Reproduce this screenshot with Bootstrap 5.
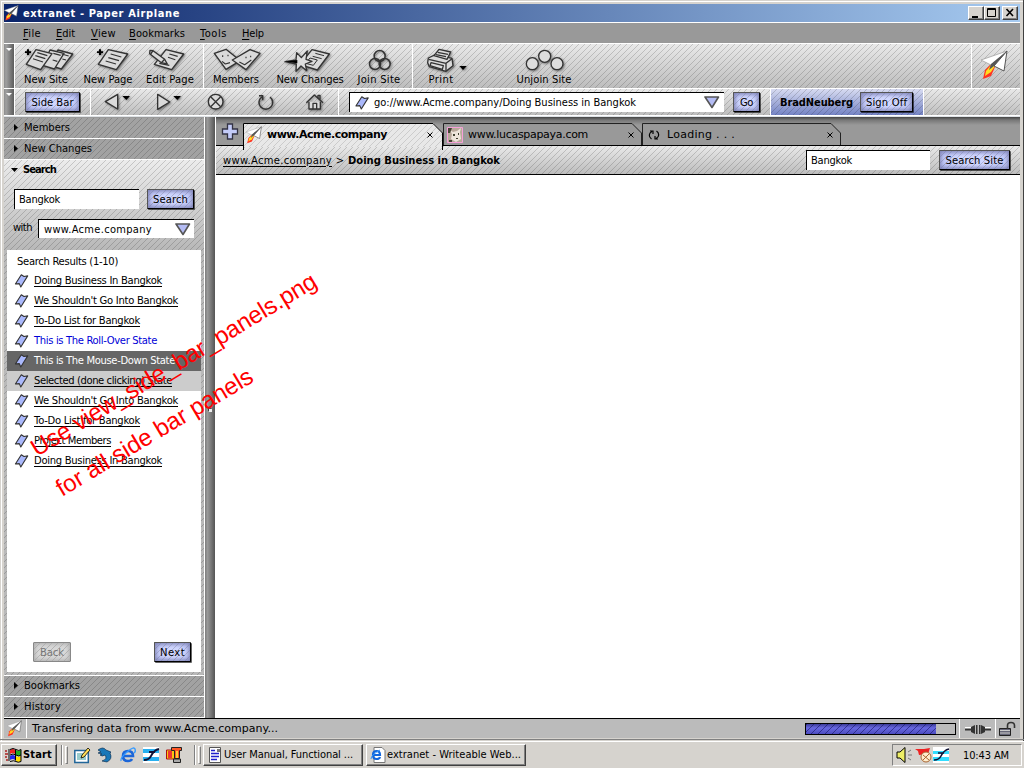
<!DOCTYPE html>
<html lang="en">
<head>
<meta charset="utf-8">
<meta name="viewport" content="width=device-width, initial-scale=1">
<title>extranet - Paper Airplane</title>
<link rel="stylesheet" href="https://cdn.jsdelivr.net/npm/bootstrap@5.3.0/dist/css/bootstrap.min.css">
<style>
:root{--lines:url("data:image/svg+xml,%3Csvg xmlns='http://www.w3.org/2000/svg' width='6' height='6' fill-opacity='.16' shape-rendering='crispEdges'%3E%3Cpath d='M5 0h1v1H5zM4 1h1v1H4zM3 2h1v1H3zM2 3h1v1H2zM1 4h1v1H1zM0 5h1v1H0z'/%3E%3C/svg%3E")}
*{box-sizing:border-box}
html,body{width:1024px;height:768px;overflow:hidden}
body{background:#d6d3ce;color:#000;font:10px/12px "DejaVu Sans",sans-serif}
svg{display:block;flex:none;overflow:visible}
[data-w]{display:inline-block;white-space:nowrap}
.tah{font-family:"DejaVu Sans Condensed","DejaVu Sans",sans-serif;font-size:11px}
.app{height:741px;padding:4px 3px 0 4px;border-right:1px solid #404040;background:#d6d3ce;box-shadow:inset 1px 1px #d6d3ce,inset 2px 2px #fff}
.inner{width:1016px}
.titlebar{height:19px;background:linear-gradient(90deg,#0a246a,#a6caf0);border-bottom:1px solid #fff;color:#fff;font-weight:bold}
.wbtn{width:16px;height:14px;background:#d6d3ce;border:1px solid;border-color:#fff #404040 #404040 #fff;box-shadow:inset -1px -1px #808080}
.menus{height:21px;background:#999;border-bottom:1px solid #fff;padding-left:19px}
.menus span{line-height:21px}
.menus u,.ul{text-underline-offset:2px;text-decoration-thickness:1px}
.hatch{background:var(--lines),linear-gradient(#e9e9e9,#bdbdbd)}
.gut{width:11px;border-right:1px solid #fff;background:linear-gradient(90deg,#8a8a8a,#a0a0a0 20%,#5c5c5c);flex:none}
.bar1{height:45px;border-bottom:1px solid #fff}
.bar2{height:27px;border-bottom:1px solid #fff}
.sep{border-right:1px solid #fff}
.tool{flex:none;text-align:center}
.tool svg,.nav2 svg{fill:none;stroke:#333;stroke-width:4;stroke-linejoin:round;filter:drop-shadow(1px 1px 1px rgba(0,0,0,.45))}
.tool .lbl{margin-top:1px;display:block}
.pg{fill:#dadada}
.k{fill:#000;stroke:none}
.pbtn{height:20px;flex:none;border:1px solid;border-color:#555 #000 #000 #555;border-radius:1px;padding:0;color:#000;text-align:center;font:10px/17px "DejaVu Sans",sans-serif;background:var(--lines),radial-gradient(#d0d6ff 40%,#aab2ea);box-shadow:inset 0 0 4px 1px #7d80b0,1px 1px 0 rgba(0,0,0,.6)}
.pbtn.off{color:#777;border-color:#888;background:var(--lines),#d8d8d8;box-shadow:inset 0 0 4px 1px #aaa}
.inp{background:#fff;height:20px;border:0 solid #000;border-width:1px 0 0 1px;flex:none;line-height:19px}
.user{background:var(--lines),linear-gradient(#d8dcf2,#7483c4);border:solid #fff;border-width:0 1px;padding:3px 0 0 9px;width:154px;margin-left:-1px}
.side{width:201px;border-right:1px solid #fff;padding-top:1px;background:#999}
.acc{height:21px;border-bottom:1px solid #fff;background:var(--lines),#a2a2a2}
.search{height:516px;border-bottom:1px solid #fff;background:var(--lines) 0 0/6px 6px,linear-gradient(#ececec,#b9b9b9 88px);position:relative}
.list{width:194px;height:422px;background:#fff;margin:12px 0 0 3px}
.hit{height:20px;padding-left:7px;gap:5px}
.split{width:11px;background:linear-gradient(90deg,#7c7c7c,#999 25%,#555);border-right:1px solid #fff;position:relative}
.grip{position:absolute;left:4px;top:292px;width:3px;height:3px;background:#eee;box-shadow:-1px -1px #444}
.tabs{height:29px;background:linear-gradient(#444,#777 3px,#999 8px);border-bottom:1px solid #000}
.tab{width:199px;height:23px;position:relative;margin-bottom:-1px}
.tab>svg.shape{position:absolute;left:0;top:0}
.tab>*:not(.shape){position:relative}
.crumb{height:29px;border-bottom:1px solid #000;padding-left:7px}
.crumb>u,.crumb>span,.crumb>b{padding-top:1px}
.stat{border-top:1px solid #000;height:20px;background:#bbb;font-size:11px}
.prog{width:151px;height:12px;border:1px solid #000;background:#bbb}
.fillb{height:10px;background:repeating-linear-gradient(135deg,rgba(0,0,70,.45) 0 1px,transparent 1px 4.95px),linear-gradient(#3c3c98,#6868e0 40%,#4c4cc0)}
.edge{height:2px;margin:1px -4px 0;border-top:1px solid #808080}
.task{height:27px;border-top:1px solid #fff;background:#d6d3ce;font-size:11px}
.tb{height:22px;border:1px solid;border-color:#fff #404040 #404040 #fff;box-shadow:inset -1px -1px #808080}
.tray{width:130px;height:22px;border:1px solid;border-color:#808080 #fff #fff #808080}
.vsep{width:1px;height:20px;background:#808080;box-shadow:1px 0 #fff}
.vgrip{width:3px;height:18px;border:1px solid;border-color:#fff #808080 #808080 #fff}
.note{position:absolute;color:#f00;font:24px/28px "Liberation Sans",sans-serif;transform-origin:0 22px;white-space:nowrap}
</style>
</head>
<body>
<svg width="0" height="0" style="position:absolute">
 <defs>
  <symbol id="plane" viewBox="0 0 27 30">
   <path d="M9 15 4 20 2 29 10 26 14 17z" fill="#f32"/><path d="M10 15 5 21 4 26 10 22 14 16z" fill="#fd2"/>
   <path d="M0 10 26 1 10 15z" fill="#fff" stroke="#999" stroke-width=".7"/><path d="M26 1 23 21 13 16z" fill="#fff" stroke="#555" stroke-width="1"/><path d="M26 1 10 14 8 20 13 16z" fill="#555"/>
  </symbol>
  <symbol id="mark" viewBox="0 0 14 14"><path d="M6.800.8 9.500 2.500 13.200 1.900 6.300 13 4.800 9.600.9 10z" fill="#aab8fb" stroke="#333" stroke-width="1.100" stroke-linejoin="round"/></symbol>
  <symbol id="down" viewBox="0 0 16 13"><path d="M1 1H14.5L8 11.500z" fill="#b4bcf4" stroke="#555" stroke-width="1.600" stroke-linejoin="round"/></symbol>
 </defs>
</svg>
<div class="app"><div class="inner">
 <header class="titlebar d-flex align-items-center tah">
  <svg width="15" height="16" class="me-1"><use href="#plane"/></svg><span data-w="157" style="padding-top:1px">extranet - Paper Airplane</span>
  <div class="d-flex ms-auto" style="padding-right:2px">
   <div class="wbtn"><svg width="14" height="12"><path d="M3 9h6v2H3z"/></svg></div>
   <div class="wbtn"><svg width="14" height="12"><path d="M2.500 1.500h8v8h-8zM2 2.500h9" fill="none" stroke="#000"/></svg></div>
   <div class="wbtn" style="margin-left:2px"><svg width="14" height="12"><path d="M3.500 2 10 9M10 2 3.500 9" stroke="#000" stroke-width="1.600"/></svg></div>
  </div>
 </header>
 <nav class="menus d-flex tah">
  <span style="width:33px"><span data-w="18"><u>F</u>ile</span></span><span style="width:35px"><span data-w="19"><u>E</u>dit</span></span><span style="width:38px"><span data-w="25"><u>V</u>iew</span></span><span style="width:71px"><span data-w="56"><u>B</u>ookmarks</span></span><span style="width:42px"><span data-w="27"><u>T</u>ools</span></span><span data-w="22"><u>H</u>elp</span>
 </nav>
 <div class="bar1 d-flex">
  <div class="gut"><svg width="10" height="10"><path d="M2 4h6L5 7z" fill="#fff"/></svg></div>
  <div class="hatch d-flex flex-grow-1">
   <div class="d-flex sep" style="width:189px">
    <div class="tool"><svg width="62" height="29" viewBox="45 132 186 87"><path class="pg" d="M174 150 218 162 184 207 150 196z"/><path class="pg" d="M150 150 192 160 163 207 128 196z"/><path class="pg" d="M108 149 156 161 122 209 79 193z"/><path d="M112 158 142 167M106 167 136 176M99 176 129 186M160 160 182 166M158 180 172 184M185 162 206 168M187 177 198 180" stroke-width="3.400"/><path class="k" d="M75 154h6v-6h6v6h6v5h-6v6h-6v-6h-6z"/></svg><span class="lbl"><span data-w="44">New Site</span></span></div>
    <div class="tool"><svg width="62" height="29" viewBox="231 132 186 87"><path class="pg" d="M325 149 383 162 349 209 295 193z"/><path d="M332 162 364 171M325 173 357 182M317 183 348 192" stroke-width="3.400"/><path class="k" d="M291 154h6v-6h6v6h6v5h-6v6h-6v-6h-6z"/></svg><span class="lbl"><span data-w="49">New Page</span></span></div>
    <div class="tool"><svg width="62" height="29" viewBox="417 132 186 87"><path class="pg" d="M498 149 551 162 515 209 463 193z"/><path d="M508 162 533 169M504 172 526 179M478 190 508 196" stroke-width="3.400"/><path class="pg" d="M450 151 459 152 494 178 502 192 484 188 449 161z"/><path d="M459 152 452 162M494 178 484 188"/></svg><span class="lbl"><span data-w="48">Edit Page</span></span></div>
   </div>
   <div class="d-flex sep" style="width:209px">
    <div class="tool"><svg width="64" height="29" viewBox="612 132 192 87"><g transform="translate(600 120)"><path class="pg" d="M43 40 78 28 121 62 78 88z"/><path class="pg" d="M97 60 150 29 180 40 138 89z"/><path d="M68 46v5M84 44v5M66 64 76 72 90 68M138 50v5M152 47v5M118 66 134 74 154 60" stroke-width="3.400"/></g></svg><span class="lbl"><span data-w="46">Members</span></span></div>
    <div class="tool"><svg width="84" height="29" viewBox="804 132 252 87"><g transform="translate(600 120)"><path class="pg" d="M336 29 388 42 352 90 300 74z"/><path d="M346 40 372 47M338 49 365 56M330 54 352 60 340 76 317 70z" stroke-width="3"/><path fill="#ddd" d="M255 65 288 60 290 38 304 53 322 33 318 58 336 64 316 72 320 92 303 78 288 94 289 72z"/><path class="k" d="M255 65 292 60 292 70z"/></g></svg><span class="lbl"><span data-w="67">New Changes</span></span></div>
    <div class="tool"><svg width="54" height="29" viewBox="1056 132 162 87"><g transform="translate(600 120)" stroke-width="4.500"><circle cx="539" cy="48" r="16.500"/><circle cx="525" cy="72" r="16.500"/><circle cx="554" cy="72" r="16.500"/></g></svg><span class="lbl"><span data-w="43">Join Site</span></span></div>
   </div>
   <div class="tool"><svg width="56" height="29" viewBox="1239 132 168 87"><g transform="translate(600 120)"><path class="pg" d="M685 54 706 44 756 55 759 77 738 94 688 80 683 68z"/><path class="pg" d="M702 47 717 28 752 36 741 58z"/><path d="M713 37 744 43M708 44 738 50M686 58 738 70 756 56M738 70V93M693 68 730 77 727 88 690 77z"/><path class="k" d="M778 78h22l-11 12z"/></g></svg><span class="lbl"><span data-w="25">Print</span></span></div>
   <div class="tool" style="margin-left:41px"><svg width="68" height="29" viewBox="1530 132 204 87"><g transform="translate(1200 120)" fill="#ddd"><circle cx="397" cy="71" r="18"/><circle cx="471" cy="71" r="18"/><circle cx="434" cy="49" r="18"/></g></svg><span class="lbl"><span data-w="55">Unjoin Site</span></span></div>
   <div class="ms-auto" style="width:49px;border-left:1px solid #fff;padding:6px 0 0 9px"><svg width="27" height="30"><use href="#plane"/></svg></div>
  </div>
 </div>
 <div class="bar2 d-flex">
  <div class="gut"><svg width="10" height="10"><path d="M2 4h6L5 7z" fill="#fff"/></svg></div>
  <div class="hatch d-flex flex-grow-1">
   <div class="sep d-flex" style="width:76px;padding:3px 0 0 10px"><button class="pbtn" style="width:55px"><span data-w="42">Side Bar</span></button></div>
   <div class="sep d-flex nav2" style="width:248px">
    <svg width="45" height="26" viewBox="273 267 135 78"><path class="pg" d="M353 283V327L316 305z"/><path class="k" d="M367 288h23l-11 12z"/></svg>
    <svg width="54" height="26" viewBox="408 267 162 78"><path class="pg" d="M473 283V328L509 306z"/><path class="k" d="M520 288h23l-11 12z"/></svg>
    <svg width="50" height="26" viewBox="570 267 150 78"><circle class="pg" cx="647" cy="305" r="22"/><path d="M632 290 662 320M662 290 632 320"/></svg>
    <svg width="50" height="26" viewBox="720 267 150 78"><path d="M777 287H788V301M785 291A20.500 20.500 0 1 0 810 291" stroke-width="4.500"/></svg>
    <svg width="48" height="26" viewBox="870 267 144 78"><path class="pg" d="M927 305V327H961V305"/><path d="M919 308 943 285 969 308M954 296V286H960V300M939 327V310H950V327"/></svg>
   </div>
   <div class="d-flex" style="width:432px;padding:3px 0 0 10px">
    <div class="inp d-flex align-items-center" style="width:375px"><svg width="14" height="14" style="margin:0 5px 0 5px"><use href="#mark"/></svg><span class="tah" data-w="262">go://www.Acme.company/Doing Business in Bangkok</span><svg width="16" height="13" class="ms-auto" style="margin-right:4px"><use href="#down"/></svg></div>
    <button class="pbtn" style="width:27px;margin-left:9px"><span data-w="13">Go</span></button>
   </div>
   <div class="user d-flex"><b class="tah" style="line-height:21px;width:80px"><span data-w="73">BradNeuberg</span></b><button class="pbtn" style="width:53px"><span data-w="41">Sign Off</span></button></div>
  </div>
 </div>
 <div class="d-flex border-top border-black" style="height:602px">
  <aside class="side flex-shrink-0">
   <div class="acc d-flex align-items-center"><svg width="20" height="8"><path d="M10 0v7l4-3.500z"/></svg><span data-w="46">Members</span></div>
   <div class="acc d-flex align-items-center"><svg width="20" height="8"><path d="M10 0v7l4-3.500z"/></svg><span data-w="68">New Changes</span></div>
   <div class="search">
    <div class="d-flex align-items-center" style="height:20px"><svg width="19" height="8"><path d="M7 2h7L10.500 6z"/></svg><b data-w="33">Search</b></div>
    <div class="d-flex" style="padding:9px 0 0 10px"><div class="inp tah" style="width:125px;padding-left:4px"><span data-w="41">Bangkok</span></div><button class="pbtn" style="width:47px;margin-left:8px"><span data-w="35">Search</span></button></div>
    <div class="d-flex" style="padding:10px 0 0 9px"><span style="width:25px;line-height:18px"><span data-w="19">with</span></span><div class="inp tah d-flex align-items-center" style="width:156px;padding-left:5px;height:19px"><span data-w="108">www.Acme.company</span><svg width="16" height="13" class="ms-auto" style="margin-right:3px"><use href="#down"/></svg></div></div>
    <div class="list d-flex flex-column">
     <div style="height:21px;padding:6px 0 0 10px"><span data-w="101">Search Results (1-10)</span></div>
     <div class="hit d-flex align-items-center"><svg width="15" height="14"><use href="#mark"/></svg><u class="ul" data-w="128">Doing Business In Bangkok</u></div>
     <div class="hit d-flex align-items-center"><svg width="15" height="14"><use href="#mark"/></svg><u class="ul" data-w="144">We Shouldn't Go Into Bangkok</u></div>
     <div class="hit d-flex align-items-center"><svg width="15" height="14"><use href="#mark"/></svg><u class="ul" data-w="106">To-Do List for Bangkok</u></div>
     <div class="hit d-flex align-items-center" style="color:#0000d8"><svg width="15" height="14"><use href="#mark"/></svg><span data-w="123">This is The Roll-Over State</span></div>
     <div class="hit d-flex align-items-center text-white" style="background:#666"><svg width="15" height="14"><use href="#mark"/></svg><span data-w="141">This is The Mouse-Down State</span></div>
     <div class="hit d-flex align-items-center" style="background:#ccc"><svg width="15" height="14"><use href="#mark"/></svg><u class="ul" data-w="138">Selected (done clicking) State</u></div>
     <div class="hit d-flex align-items-center"><svg width="15" height="14"><use href="#mark"/></svg><u class="ul" data-w="144">We Shouldn't Go Into Bangkok</u></div>
     <div class="hit d-flex align-items-center"><svg width="15" height="14"><use href="#mark"/></svg><u class="ul" data-w="106">To-Do List for Bangkok</u></div>
     <div class="hit d-flex align-items-center"><svg width="15" height="14"><use href="#mark"/></svg><u class="ul" data-w="77">Project Members</u></div>
     <div class="hit d-flex align-items-center"><svg width="15" height="14"><use href="#mark"/></svg><u class="ul" data-w="128">Doing Business In Bangkok</u></div>
     <div class="d-flex mt-auto justify-content-between" style="padding:0 10px 10px 26px"><button class="pbtn off" style="width:38px"><span data-w="24">Back</span></button><button class="pbtn" style="width:37px"><span data-w="25">Next</span></button></div>
    </div>
   </div>
   <div class="acc d-flex align-items-center"><svg width="20" height="8"><path d="M10 0v7l4-3.500z"/></svg><span data-w="56">Bookmarks</span></div>
   <div class="acc d-flex align-items-center"><svg width="20" height="8"><path d="M10 0v7l4-3.500z"/></svg><span data-w="37">History</span></div>
  </aside>
  <div class="split flex-shrink-0"><div class="grip"></div></div>
  <main class="flex-grow-1 bg-white">
   <div class="tabs d-flex align-items-end">
    <svg width="27" height="23"><path d="M11 2.500h5v5h5v5h-5v5h-5v-5H6v-5h5z" transform="translate(.5 -.5)" fill="#c3cbf8" stroke="#334" stroke-width="1.300"/></svg>
    <div class="tab d-flex align-items-center" style="z-index:2;width:200px">
     <svg class="shape" width="200" height="28"><defs><pattern id="hp" width="6" height="6" patternUnits="userSpaceOnUse"><path d="M5 0h1v1H5zM4 1h1v1H4zM3 2h1v1H3zM2 3h1v1H2zM1 4h1v1H1zM0 5h1v1H0z" fill-opacity=".12"/></pattern></defs><path d="M0 0H190L199 9V24H0z" fill="#e8e8e8"/><path d="M0 0H190L199 9V24H0z" fill="url(#hp)"/><path d="M.5 27V.5H190L199.500 10V27" fill="none" stroke="#000"/></svg>
     <svg width="16" height="18" style="margin-left:3px"><use href="#plane"/></svg><b class="ms-1" style="padding-left:1px;font-size:11px"><span data-w="120">www.Acme.company</span></b><svg width="6" height="6" style="margin-left:40px"><path d="M.5.500l5 5m0-5-5 5" stroke="#000"/></svg>
    </div>
    <div class="tab d-flex align-items-center" style="font-size:11px">
     <svg class="shape" width="199" height="23"><path d="M.5 22V.5H189L198.500 10V22" fill="none" stroke="#222"/></svg>
     <svg width="16" height="16" style="margin-left:4px"><path d="M.5.500h15v15H.5z" fill="#b9a99b" stroke="#f7a0d8"/><path d="M3 3 5 7 4 12 9 15 14 12 13 5 14 1 10 4 6 5z" fill="#eee5da"/><path d="M1 1h4l-2 5H1zM2 13h3v2H2zM6 7h2v2H6zM11 6h1v2h-1zM9 11h2v1H9z" fill="#443"/></svg><span class="ms-1" style="padding-left:1px"><span data-w="120">www.lucaspapaya.com</span></span><svg width="6" height="6" style="margin-left:40px"><path d="M.5.500l5 5m0-5-5 5" stroke="#000"/></svg>
    </div>
    <div class="tab d-flex align-items-center" style="font-size:11px">
     <svg class="shape" width="200" height="23"><path d="M.5 22V.5H189L198.500 10V22" fill="none" stroke="#222"/></svg>
     <svg width="12" height="10" style="margin-left:6px"><path d="M3.500 9C.5 7 .5 3 4 1.500M2 1h3v3M8.500 1C11.500 3 11.500 7 8 8.500M10 9H7V6" fill="none" stroke="#000" stroke-width="1.200"/></svg><span style="margin-left:7px"><span data-w="68">Loading . . .</span></span><svg width="6" height="6" style="margin-left:92px"><path d="M.5.500l5 5m0-5-5 5" stroke="#000"/></svg>
    </div>
   </div>
   <div class="crumb hatch d-flex align-items-center"><u class="ul" data-w="109">www.Acme.company</u><span style="width:16px;text-align:center">&gt;</span><b data-w="152">Doing Business in Bangkok</b>
    <div class="inp tah ms-auto" style="width:124px;padding-left:4px"><span data-w="41">Bangkok</span></div><button class="pbtn" style="width:71px;margin:0 10px 0 9px"><span data-w="58">Search Site</span></button></div>
  </main>
 </div>
 <footer class="stat d-flex align-items-center">
  <div class="sep" style="width:23px;height:19px;padding:1px 0 0 3px"><svg width="15" height="17"><use href="#plane"/></svg></div><span data-w="246" style="margin-left:5px">Transfering data from www.Acme.company...</span>
  <div class="prog ms-auto"><div class="fillb" style="width:130px"></div></div>
  <div class="d-flex align-items-center justify-content-center" style="border:solid #fff;border-width:0 1px;width:37px;height:19px;margin-left:3px"><svg width="26" height="10"><path d="M0 4h8M19 4h7" stroke="#fff" stroke-width="2"/><path d="M0 5.500h8M19 5.500h7" stroke="#333" stroke-width="1.800"/><path d="M6 3 10 1v9L6 8zM20 3 16 1v9l4-2zM11 1h1.500v9H11zM14 1h1.500v9H14z" fill="#333"/></svg></div>
  <svg width="24" height="16"><path d="M3.500 7.500h11v7h-11z" fill="#667" stroke="#222"/><path d="M4 9.500h10M4 12h10" stroke="#ccc"/><path d="M11.500 8V4.500q0-3 3.500-3t3.500 3V7" fill="none" stroke="#333" stroke-width="1.600"/></svg>
 </footer>
</div><div class="edge"></div></div>
<div class="task d-flex align-items-center tah">
 <div class="tb d-flex align-items-center fw-bold" style="width:56px;margin-left:1px;padding-left:3px"><svg width="17" height="14"><path d="M5 2q3-2 5 0v4q-2-2-5 0z" fill="#e22"/><path d="M11 2q2 2 5 0v5q-3 2-5 0z" fill="#2a2"/><path d="M5 8q3-2 5 0v4q-2-2-5 0z" fill="#22e"/><path d="M11 8q2 2 5 0v5q-3 2-5 0z" fill="#fd0"/><path d="M4 1v12M10.500 1.500v11M5 7q3-2 6 0t5 0M5 1.500q3-2 6 0t5 0v12q-3 1.500-5 0t-6 0" fill="none" stroke="#000"/><path d="M0 3h2M0 6h3M0 9h2M1 12h2" stroke="#a22" stroke-width="1.500"/></svg><span data-w="29" style="margin-left:1px">Start</span></div>
 <div class="vsep" style="margin-left:4px"></div><div class="vgrip" style="margin-left:3px"></div>
 <div class="d-flex" style="margin-left:6px;gap:7px">
  <svg width="16" height="16"><path d="M.8 3.500h13.500v12H.8z" fill="#fff" stroke="#269" stroke-width="1.500"/><path d="M3 6h9v7H3z" fill="#9cc"/><path d="M14 1 8 8 7 11 10 10 16 3z" fill="#fd5" stroke="#000" stroke-width=".8"/></svg>
  <svg width="16" height="16"><path d="M1 3q5-4 8 0l5 2-1 1q3 6-3 9l-5-1q6-2 3-6-3 2-5 0l2-1-4-1 3-1z" fill="#1a78b8" stroke="#024" stroke-width=".6"/></svg>
  <svg width="16" height="16"><path d="M4 9h9q0-5-5-5t-5 5 5 5q3 0 4-2" fill="none" stroke="#1c66d8" stroke-width="2.600"/><path d="M1 14Q0 11 7 5T15 2t-1 4" fill="none" stroke="#39f" stroke-width="1.300"/></svg>
  <svg width="16" height="16"><path d="M0 0h16v16H0z" fill="#fff"/><path d="M0 2h16v4H0zM0 10h16v4H0z" fill="#28b0f0"/><path d="M1 13Q6 13 8 9 11 3 16 2M6 5h6" stroke="#113" stroke-width="1.800" fill="none"/></svg>
  <svg width="16" height="16"><path d="M.5 3h11v9H.5z" fill="#f9c810" stroke="#a11"/><path d="M2 4h4v7H2z" fill="#e33"/><path d="M5.500 .5h10v3h-2v8h-5v-8h-3z" fill="#f52" stroke="#222"/><path d="M10 4h2v7h-2z" fill="#fc3"/><path d="M7.500 12h7v3.500h-7z" fill="#aaa" stroke="#222"/></svg>
 </div>
 <div class="vsep" style="margin-left:12px"></div><div class="vgrip" style="margin-left:3px"></div>
 <div class="tb d-flex align-items-center" style="width:160px;margin-left:2px;padding-left:5px"><svg width="13" height="16"><path d="M.5.500h11v15H.5z" fill="#fff" stroke="#555"/><path d="M2 3.500h4M2 6.500h8M2 9.500h8M2 12.500h6" stroke="#22c" stroke-width="1.300"/><path d="M8 2h3v3H8z" fill="#777"/></svg><span data-w="129" style="margin-left:2px">User Manual, Functional ...</span></div>
 <div class="tb d-flex align-items-center" style="width:160px;margin-left:3px;padding-left:3px"><svg width="16" height="16"><path d="M4 .5h8l3 3v12H4z" fill="#fff" stroke="#777"/><path d="M3 8h7q0-4-3.500-4T3 8t3.500 4q3 0 3.500-2" fill="none" stroke="#16d" stroke-width="2.200"/><path d="M1 12Q1 8 10 3" stroke="#39f" fill="none"/></svg><span data-w="134" style="margin-left:1px">extranet - Writeable Web...</span></div>
 <div class="tray d-flex align-items-center ms-auto" style="margin-right:2px;padding-left:3px"><svg width="53" height="16"><path d="M1 5h3l5-4.500v15L4 11H1z" fill="#ee6" stroke="#000"/><path d="M12 5l3-2M12 8h4M12 11l3 2" stroke="#777"/><path d="M19 2h9l6-1-2 6-9 1-1-4z" fill="#e22"/><circle cx="30" cy="10" r="5" fill="#fec" stroke="#a63"/><path d="M27 8l6 5M33 7l-6 6" stroke="#a63"/><path d="M37 0h16v16H37z" fill="#fff"/><path d="M37 4h16v3H37zM37 10h16v4H37z" fill="#3df"/><path d="M38 13q5 0 7-4 3-6 8-7M42 6h6" stroke="#113" stroke-width="1.600" fill="none"/></svg><span data-w="46" style="margin-left:14px;padding-top:1px">10:43 AM</span></div>
</div>
<div class="note" style="left:37px;top:435px;transform:rotate(-31.300deg)"><span data-w="330">Use view_side_bar_panels.png</span></div>
<div class="note" style="left:62px;top:475px;transform:rotate(-31deg)"><span data-w="225">for all side bar panels</span></div>
<script src="https://cdn.jsdelivr.net/npm/bootstrap@5.3.0/dist/js/bootstrap.bundle.min.js"></script>
<script>
// Track each label out to its nominal width
document.querySelectorAll('[data-w]').forEach(function (el) {
  el.style.flex = 'none';
  el.style.letterSpacing = '0px';
  var natural = el.closest('.note') ? el.offsetWidth : el.getBoundingClientRect().width;
  el.style.letterSpacing = ((+el.dataset.w - natural) / el.textContent.length) + 'px';
});
</script>
</body>
</html>
